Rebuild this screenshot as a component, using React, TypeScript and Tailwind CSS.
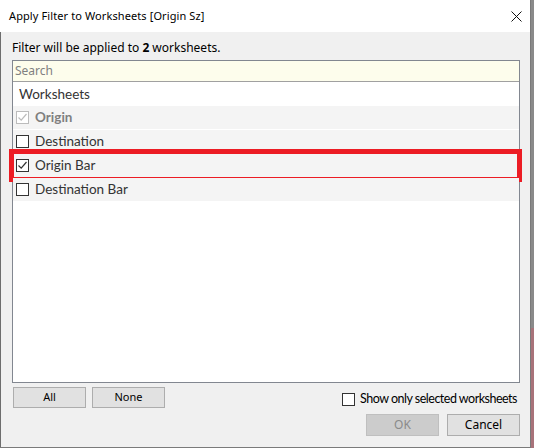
import React from "react";

const ui = { fontFamily: '"Noto Sans", "Open Sans", sans-serif' };
const list = { fontFamily: 'Lato, "Noto Sans", sans-serif' };

const Check = ({ checked, disabled }: { checked?: boolean; disabled?: boolean }) => (
  <span
    className={`w-[13px] h-[13px] border bg-white flex items-center justify-center shrink-0 ${
      disabled ? "border-[#bcbcbc]" : "border-[#333333]"
    }`}
  >
    {checked && (
      <svg width="11" height="11" viewBox="0 0 11 11">
        <path
          d="M1.5 5.5 L4.2 8.2 L9.5 2"
          fill="none"
          stroke={disabled ? "#bcbcbc" : "#333333"}
          strokeWidth="1.2"
        />
      </svg>
    )}
  </span>
);

const rows = [
  { name: "Origin", checked: true, disabled: true },
  { name: "Destination", checked: false },
  { name: "Origin Bar", checked: true, marked: true },
  { name: "Destination Bar", checked: false },
];

export default function App() {
  return (
    <div className="w-[534px] h-[448px] flex bg-[#f0f0f0] overflow-hidden" style={ui}>
      <div className="w-[531px] h-[448px] flex flex-col border-r border-b border-[#7a7a7a]">
        <div className="h-[32px] bg-white flex items-center justify-between pl-[9px] pr-[8px] shrink-0">
          <span className="text-[11px] tracking-[0.1px] text-black">Apply Filter to Worksheets [Origin Sz]</span>
          <svg width="11" height="11" viewBox="0 0 11 11">
            <path d="M0.5 0.5 L10.5 10.5 M10.5 0.5 L0.5 10.5" stroke="#111" strokeWidth="1" />
          </svg>
        </div>

        <div className="flex-1 flex flex-col border-l border-[#6d6d6d] bg-[#f0f0f0] pl-[11px] pr-[10px]">
          <div className="h-[28px] flex items-end pb-[3px] text-[12px] text-black">
            Filter will be applied to&nbsp;<b>2</b>&nbsp;worksheets.
          </div>

          <div className="h-[323px] border border-[#828790] bg-white flex flex-col">
            <div className="h-[21px] bg-[#fdfdec] border-b border-[#a0a0a0] flex items-center pl-[2px] text-[12px] text-[#808080]">
              Search
            </div>
            <div className="h-[24px] flex items-center pl-[6px] text-[13.5px] text-[#333333]" style={list}>
              Worksheets
            </div>
            <div className="flex flex-col gap-[1px]" style={list}>
              {rows.map((r) => (
                <div
                  key={r.name}
                  className={`relative h-[23px] bg-[#f4f4f4] flex items-center gap-[6px] pl-[3px] text-[13.5px] ${
                    r.disabled ? "text-[#7f7f7f] font-bold" : "text-[#333333]"
                  }`}
                >
                  <Check checked={r.checked} disabled={r.disabled} />
                  <span>{r.name}</span>
                  {r.marked && (
                    <div className="absolute left-[-4px] right-[-3px] top-[-5px] bottom-[-5px] border-[5px] border-[#ec1c24]" />
                  )}
                </div>
              ))}
            </div>
          </div>

          <div className="flex items-start justify-between mt-[4px]">
            <div className="flex gap-[6px] pl-[1px]">
              <button className="w-[73px] h-[21px] bg-[#e1e1e1] border border-[#adadad] text-[11px] text-black">
                All
              </button>
              <button className="w-[73px] h-[21px] bg-[#e1e1e1] border border-[#adadad] text-[11px] text-black">
                None
              </button>
            </div>
            <div className="flex flex-col items-end gap-[5px] pt-[3px]">
              <div
                className="flex items-center gap-[5px] pr-[3px] text-[12.5px] tracking-[-0.5px] text-black"
                style={list}
              >
                <Check />
                <span>Show only selected worksheets</span>
              </div>
              <div className="flex gap-[8px]">
                <button className="w-[73px] h-[22px] bg-[#cccccc] border border-[#bfbfbf] text-[12px] text-[#8a8a8a]">
                  OK
                </button>
                <button className="w-[73px] h-[22px] bg-[#e1e1e1] border border-[#adadad] text-[12px] text-black">
                  Cancel
                </button>
              </div>
            </div>
          </div>
        </div>
      </div>
      <div className="w-[3px] h-full flex flex-col">
        <div className="flex-1 bg-[#8a8a8a]" />
        <div className="h-[120px] bg-[#a8737a]" />
      </div>
    </div>
  );
}
